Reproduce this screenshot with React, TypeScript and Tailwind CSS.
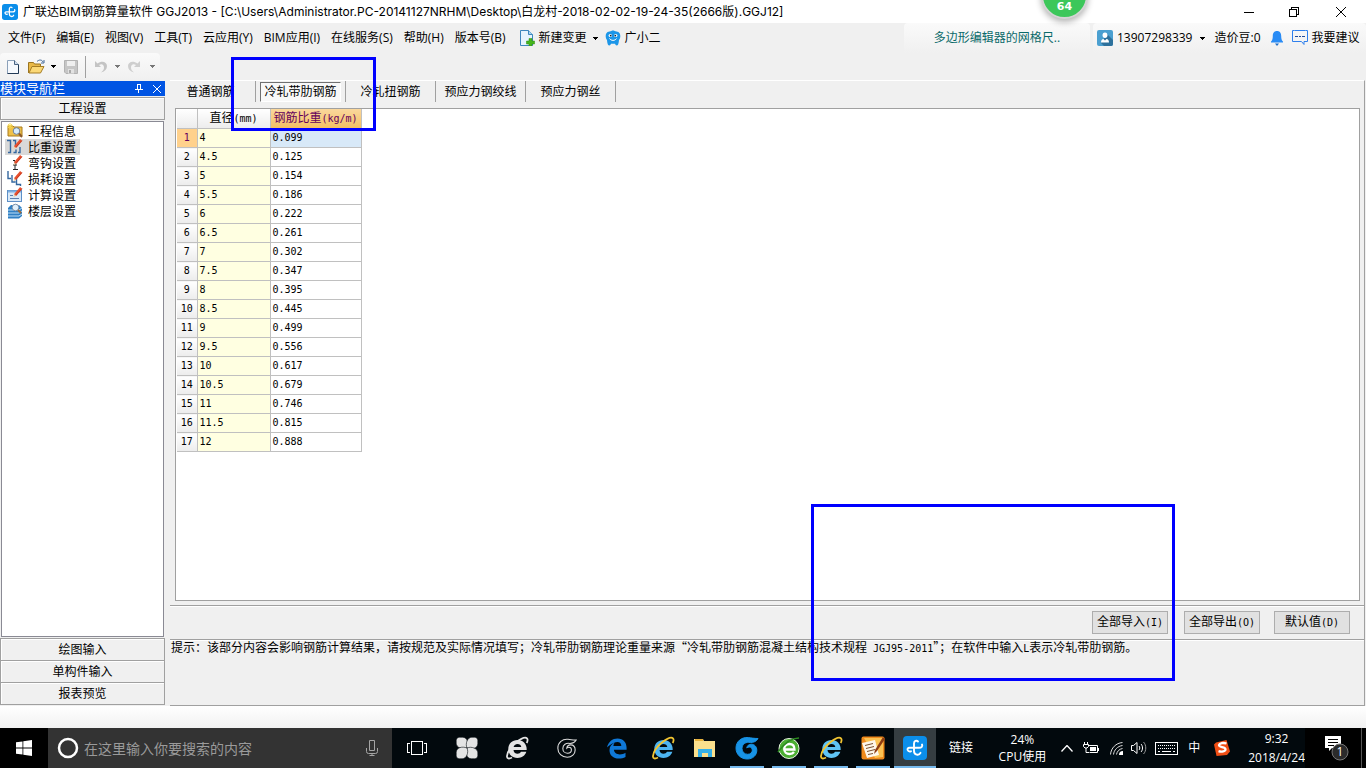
import { useState } from 'react';
import type { ReactNode } from 'react';

const MENUS = ['文件(F)', '编辑(E)', '视图(V)', '工具(T)', '云应用(Y)', 'BIM应用(I)', '在线服务(S)', '帮助(H)', '版本号(B)'];
const TABS = ['普通钢筋', '冷轧带肋钢筋', '冷轧扭钢筋', '预应力钢绞线', '预应力钢丝'];
const TAB_WIDTHS = ['w-[86px] pr-[4px]', 'w-[90px]', 'w-[90px]', 'w-[90px]', 'w-[90px]'];

const WEIGHTS: [string, string][] = [
  ['4', '0.099'],
  ['4.5', '0.125'],
  ['5', '0.154'],
  ['5.5', '0.186'],
  ['6', '0.222'],
  ['6.5', '0.261'],
  ['7', '0.302'],
  ['7.5', '0.347'],
  ['8', '0.395'],
  ['8.5', '0.445'],
  ['9', '0.499'],
  ['9.5', '0.556'],
  ['10', '0.617'],
  ['10.5', '0.679'],
  ['11', '0.746'],
  ['11.5', '0.815'],
  ['12', '0.888'],
];

// Half-width characters, 6px each beside 12px Chinese text
function Half({ children }: { children: ReactNode }) {
  return <span className="font-['DejaVu_Sans_Mono',monospace] text-[10px]">{children}</span>;
}

function Caret({ className = 'text-black' }: { className?: string }) {
  return (
    <svg width="5" height="3" viewBox="0 0 5 3" className={`shrink-0 ${className}`} shapeRendering="crispEdges">
      <path d="M0 0h5v1H4v1H3v1H2V2H1V1H0z" fill="currentColor" />
    </svg>
  );
}

function GlodonMark({ size }: { size: number }) {
  return (
    <svg width={size} height={size} viewBox="0 0 24 24" className="shrink-0">
      <rect width="24" height="24" rx="4" fill="#0b8eea" />
      <path
        d="M15 5.500C13.500 3.800 11 5 11 7.500V15c0 4 5 5 6.500 1.800M8 15.300c-3.500 1-5-3.300-1.500-3.500H16c2.600 0 3.800-1.500 3-3.300"
        fill="none"
        stroke="#fff"
        strokeWidth="1.900"
        strokeLinecap="round"
      />
    </svg>
  );
}

/* ---------- side bar icons ---------- */

function Pencil() {
  return (
    <>
      <path d="M14.2 1 8 8.2" stroke="#e8502e" strokeWidth="2.8" />
      <path d="M15 1.3 8.8 8.6" stroke="#b8321c" strokeWidth="0.7" />
      <path d="m6.5 10.2.8-2.6 1.6 1.4z" fill="#f2cfa0" />
    </>
  );
}

function Icon16({ children }: { children: ReactNode }) {
  return (
    <svg width="16" height="16" viewBox="0 0 16 16" fill="none" className="shrink-0">
      {children}
    </svg>
  );
}

const NAV_ITEMS: { label: string; icon: ReactNode }[] = [
  {
    label: '工程信息',
    icon: (
      <Icon16>
        <path d="M1 3h5l1 1h8v9H1z" fill="#efc14a" stroke="#a97a1c" />
        <path d="M3 0v6M0 3h6M1 1l4 4M5 1 1 5" stroke="#f8d94c" strokeWidth="0.9" />
        <circle cx="9.5" cy="8" r="3.3" fill="#d7ecfb" stroke="#6b7f99" />
        <path d="m12 10.5 3 3.5" stroke="#8c5a2a" strokeWidth="2" />
      </Icon16>
    ),
  },
  {
    label: '比重设置',
    icon: (
      <Icon16>
        <path d="M0 1.500h3.500v12H1M6 1.500h2.500v6M6.500 13.500h2.500v-3M11 13.500h2V8" stroke="#35679f" strokeWidth="1.4" />
        <Pencil />
      </Icon16>
    ),
  },
  {
    label: '弯钩设置',
    icon: (
      <Icon16>
        <path d="M8 6v9M6 10h4M6 14.500h5M6 5.500h2" stroke="#222" />
        <Pencil />
      </Icon16>
    ),
  },
  {
    label: '损耗设置',
    icon: (
      <Icon16>
        <path d="M1 0v7.500h3M5 4v7h3.500M9.500 8v5.500h4V15" stroke="#35679f" strokeWidth="1.4" />
        <Pencil />
      </Icon16>
    ),
  },
  {
    label: '计算设置',
    icon: (
      <Icon16>
        <rect x="0.500" y="3.500" width="14" height="11" fill="#d9e9f8" stroke="#5d8fc7" />
        <path d="M1 4.500h13" stroke="#7fb0e2" strokeWidth="2" />
        <path d="M3 8.500h3M3 11.500h9" stroke="#5d7fae" />
        <Pencil />
      </Icon16>
    ),
  },
  {
    label: '楼层设置',
    icon: (
      <Icon16>
        <path d="m1 5 3-3h8l3 3v8l-3 2.500H1z" fill="#2f7fc4" />
        <path d="M1 7h11l3-2M1 10h11l3-2M1 13h11l3-2" stroke="#bfe0f7" />
        <circle cx="8.500" cy="4.500" r="3.300" fill="#e0f0fc" stroke="#7a8fa8" />
        <path d="m11 7 3 3" stroke="#9a6a3a" strokeWidth="2" />
      </Icon16>
    ),
  },
];

/* ---------- task bar icons ---------- */

function Svg24({ children }: { children: ReactNode }) {
  return (
    <svg width="24" height="24" viewBox="0 0 24 24" fill="none" className="shrink-0">
      {children}
    </svg>
  );
}

const EDGE_E =
  'M2 11.500C3.200 5.800 7.500 2.500 12.500 2.500c5.800 0 9.100 4 9.100 9.300v2H8.900c.3 3.100 2.800 4.600 5.900 4.600 2.100 0 4.200-.6 5.700-1.600v4.100c-2 1.100-4.300 1.600-6.700 1.600-5.400 0-9.300-3.100-9.300-8.300 0-3.900 2.100-6.500 5.400-7.800-1 1.100-1.400 2.300-1.500 3.600h7.900c0-2.700-1.500-4.100-4-4.100-3.600 0-7.400 2.700-10.400 5.600z';
const IE_E =
  'M12.500 4c-5.300 0-9.200 3.800-9.200 9s3.900 9 9.200 9c4.300 0 7.600-2.300 8.800-6.200H16c-.6 1.200-1.900 1.900-3.400 1.900-2.400 0-4-1.500-4.100-3.700h13.200C22 8 18 4 12.500 4zM8.600 11c.4-1.900 1.800-3 3.900-3s3.600 1.100 3.800 3z';
const SWIRL =
  'M23 2.500c-1.500 3-4.500 4-7.500 4C11 5.500 7 8 7 12.500c0 3.500 2.600 5.800 5.700 5.800 2.700 0 4.600-1.800 4.600-4.100 0-1.900-1.300-3.200-3.100-3.200-1 0-1.800.4-2.400 1 .3-2.300 2-3.800 4.500-3.800 3.200 0 5.500 2.500 5.500 6.100 0 5-4 8.700-9.500 8.700C5.800 23 1 18.300 1 12.200 1 5.500 6.500.8 13.300 1.600c2.400.3 6 .9 9.700.9z';

function ExplorerE({ color, ring }: { color: string; ring: string }) {
  return (
    <Svg24>
      <path d={IE_E} fill={color} />
      <path d="M7 21.500c-3 1.700-5.300 1.200-5-1.500.5-4 4-9.500 9-13.500S20.500.8 22 2.300c.9.900.7 2.600-.3 4.700" stroke={ring} strokeWidth="1.800" />
    </Svg24>
  );
}

const TASKS: { name: string; cell: string; bar?: string; icon: ReactNode }[] = [
  {
    name: '风车',
    cell: 'w-[50px]',
    icon: (
      <Svg24>
        {[0, 90, 180, 270].map(a => (
          <path key={a} d="M12 12C7.500 14 1.200 11.500 1.200 7.200V4.500c0-2 1.300-3.300 3.300-3.300h3C12.300 1.200 14 7 12 12z" fill="#e4e4e4" stroke="#02090d" strokeWidth="0.6" transform={`rotate(${a} 12 12)`} />
        ))}
      </Svg24>
    ),
  },
  { name: '浏览器', cell: 'w-[50px]', icon: <ExplorerE color="#e4e4e4" ring="#e4e4e4" /> },
  {
    name: '广联达',
    cell: 'w-[50px]',
    icon: (
      <svg width="20" height="20" viewBox="0 0 24 24" fill="none">
        <path d={SWIRL} stroke="#dcdcdc" strokeWidth="1.300" />
      </svg>
    ),
  },
  { name: 'Edge', cell: 'w-[50px]', icon: <Svg24><path d={EDGE_E} fill="#0f78d7" /></Svg24> },
  { name: 'Internet Explorer', cell: 'w-[42px]', icon: <ExplorerE color="#4db4f0" ring="#f2c532" /> },
  {
    name: '文件资源管理器',
    cell: 'w-[42px]',
    icon: (
      <Svg24>
        <path d="M1 3h9l1 2h11v16H1z" fill="#fbe08c" />
        <path d="M2 3h8v2H2z" fill="#e8b23c" />
        <path d="M5 21v-8h14v8h-4v-4H9v4z" fill="#36b1e8" />
      </Svg24>
    ),
  },
  { name: '广联达G+', cell: 'w-[42px]', bar: 'w-[34px]', icon: <Svg24><path d={SWIRL} fill="#1793e6" stroke="#1793e6" /></Svg24> },
  {
    name: '360浏览器',
    cell: 'w-[42px]',
    bar: 'w-[34px]',
    icon: (
      <Svg24>
        <circle cx="12" cy="12.500" r="10" fill="#4cae32" stroke="#e9f5e3" />
        <path d="M7.500 13.500h10c0-3.500-2-5.500-5-5.500s-5.300 2.200-5.300 5 2.200 5 5.300 5c2 0 3.600-.7 4.500-2" stroke="#fff" strokeWidth="2.300" />
        <path d="M1 16C6 9 14 2 22 2" stroke="#2b8a1f" strokeWidth="1.500" />
      </Svg24>
    ),
  },
  { name: 'IE', cell: 'w-[42px]', bar: 'w-[34px]', icon: <ExplorerE color="#5fc4f5" ring="#f2c532" /> },
  {
    name: '记事',
    cell: 'w-[42px]',
    bar: 'w-[34px]',
    icon: (
      <Svg24>
        <rect x="0.500" y="0.500" width="23" height="23" rx="2" fill="#f08a1c" />
        <path d="M3 2h19v19l-8 1z" fill="#fbc253" />
        <path d="m1 7 13-3 4 15-12 3z" fill="#fdf6ea" />
        <path d="m4 9.500 8-2M5 12.500l8-2M6 15.500l8-2M7 18.500l5-1" stroke="#7a5030" />
        <path d="m22 1-8 13-1 4 3-3 8-12z" fill="#8e3c12" />
      </Svg24>
    ),
  },
  { name: '钢筋算量', cell: 'w-[42px] bg-[#353d41]', bar: 'w-full', icon: <GlodonMark size={24} /> },
];

/* ---------- window parts ---------- */

function TitleBar() {
  return (
    <header className="flex h-[23px] shrink-0 items-center bg-white pl-[2px]">
      <GlodonMark size={16} />
      <h1 className="ml-[5px] flex-1 font-['Inter','Noto_Sans_CJK_SC',sans-serif] text-[12px] leading-[16px] whitespace-nowrap">
        广联达BIM钢筋算量软件 GGJ2013 - [C:\Users\Administrator.PC-20141127NRHM\Desktop\白龙村-2018-02-02-19-24-35(2666版).GGJ12]
      </h1>
      <button aria-label="最小化" className="grid w-[46px] place-items-center">
        <svg width="10" height="10" shapeRendering="crispEdges"><path d="M0 5.500h10" stroke="#000" /></svg>
      </button>
      <button aria-label="还原" className="grid w-[44px] place-items-center">
        <svg width="10" height="10" fill="none" stroke="#000" shapeRendering="crispEdges">
          <path d="M.5 2.500h7v7h-7zM2.500 2.500v-2h7v7h-2" />
        </svg>
      </button>
      <button aria-label="关闭" className="grid w-[50px] place-items-center">
        <svg width="10" height="10" stroke="#000"><path d="m0 0 10 10M10 0 0 10" /></svg>
      </button>
    </header>
  );
}

function MenuBar() {
  return (
    <div className="flex h-[30px] shrink-0 items-start justify-between text-[12px]">
      <nav className="flex h-[30px] items-center gap-[11px] pl-2 whitespace-nowrap">
        {MENUS.map(m => <button key={m}>{m}</button>)}
        <button className="ml-[3px] flex items-center gap-[4px]">
          <svg width="15" height="16" viewBox="0 0 15 16" fill="none">
            <path d="M.5.5h8l4 4v11H.5z" fill="#e6f4fd" stroke="#3d87bd" />
            <path d="M8.500.5v4h4" fill="#a9d5f2" stroke="#3d87bd" />
            <path d="M9 8.500h3v2.500h2.500v3H12V16H9v-2H6.500v-3H9z" fill="#46b51c" stroke="#2e8a10" strokeWidth="0.500" />
          </svg>
          新建变更
          <span className="pl-[2px]"><Caret /></span>
        </button>
        <button className="-ml-[4px] flex items-center gap-[4px]">
          <svg width="16" height="16" viewBox="0 0 16 16">
            <path d="M8 .5c1.200 0 2 .7 3.500 1C14.500 1.800 15.500 4 15.300 6.500c-.1 1.500-.5 2.500-1.300 3.500-.2 2-.5 3.500-1 4.800-.5 1-2 1-2.500 0l-.5-1H6l-.5 1c-.5 1-2 1-2.500 0-.5-1.300-.8-2.800-1-4.800C1.200 9 .8 8 .7 6.500.5 4 1.500 1.800 4.500 1.500 6 1.200 6.800.5 8 .5z" fill="#1c96e8" />
            <ellipse cx="5.300" cy="5.500" rx="1.700" ry="1.500" fill="#fff" />
            <ellipse cx="10.700" cy="5.500" rx="1.700" ry="1.500" fill="#fff" />
            <circle cx="5.700" cy="5.600" r="0.900" fill="#123" />
            <circle cx="10.300" cy="5.600" r="0.900" fill="#123" />
            <path d="M4.500 8.500c1.500 2.500 5.500 2.500 7 0" stroke="#fff" fill="none" />
          </svg>
          广小二
        </button>
      </nav>
      <div className="flex h-[30px] gap-[3px] whitespace-nowrap">
        <a href="#tips" className="flex w-[186px] items-center justify-center rounded-t bg-linear-to-b from-[#fafafa] to-[#f0f0f0] text-[#0a6a6a]">
          多边形编辑器的网格尺..
        </a>
        <div className="flex w-[273px] items-center rounded-t bg-linear-to-b from-[#fafafa] to-[#f0f0f0] pl-[4px]">
          <svg width="16" height="16" viewBox="0 0 16 16">
            <rect width="16" height="16" rx="2" fill="#4a9fd0" />
            <path d="m10 4 6 6v4a2 2 0 0 1-2 2H7l-3-3z" fill="#2d719c" />
            <path d="M8 2.500c1.700 0 2.500 1.200 2.500 2.700S9.500 8 8 8 5.500 6.700 5.500 5.200 6.300 2.500 8 2.500zM4 12.500c0-2 1-3.500 2.500-3.500L8 10.500 9.500 9c1.500 0 2.500 1.500 2.500 3.500z" fill="#fff" />
          </svg>
          <button className="ml-[4px] flex items-center gap-[8px]">13907298339<Caret /></button>
          <span className="ml-[9px]">造价豆:0</span>
          <button aria-label="消息" className="ml-[10px]">
            <svg width="12" height="15" viewBox="0 0 12 15">
              <path d="M6 0c3 0 4.200 2.200 4.200 5 0 3 .6 4.500 1.800 5.500v1H0v-1C1.200 9.500 1.800 8 1.800 5 1.800 2.200 3 0 6 0z" fill="#2a8cf5" />
              <path d="M4 12.500h4L6 15z" fill="#1f6fc9" />
            </svg>
          </button>
          <button className="ml-[9px] flex items-center gap-[4px]">
            <svg width="16" height="16" viewBox="0 0 16 16" fill="none">
              <path d="M2.500.5h-2v11h9l2.500 3v-3h3.500V.5h-2M2.500.5h11" stroke="#2f80ed" />
              <path d="M3 6.500h3M7 6.500h2M10 6.500h3" stroke="#234d9c" />
            </svg>
            我要建议
          </button>
        </div>
      </div>
    </div>
  );
}

function ToolBar() {
  return (
    <div className="flex h-[27px] w-[160px] shrink-0 items-center rounded bg-linear-to-b from-[#fafafa] to-[#f0f0f0] pl-[7px]">
      <button aria-label="新建">
        <svg width="12" height="14" viewBox="0 0 12 14">
          <path d="M.5.5h7l4 4v9H.5z" fill="#f6f9fd" stroke="#8ba0b9" />
          <path d="M11.500 4.500v9H.5" stroke="#223a56" fill="none" />
          <path d="M7.500.5v4h4" fill="#cfdceb" stroke="#4a6482" />
        </svg>
      </button>
      <button aria-label="打开" className="ml-[9px]">
        <svg width="17" height="15" viewBox="0 0 17 15">
          <path d="M.5 14V3.500h5l1 1.500h6v4" fill="#e9b948" stroke="#9a7420" />
          <path d="M1 14 4 7.500h12L12.500 14z" fill="#fbd876" stroke="#a57d25" />
          <path d="M9 2.500C11 .5 14 .5 15 3m1-2v3h-3" fill="none" stroke="#3f6697" />
        </svg>
      </button>
      <button aria-label="打开最近" className="ml-[6px]"><Caret /></button>
      <button aria-label="保存" disabled className="ml-[8px]">
        <svg width="14" height="14" viewBox="0 0 14 14">
          <path d="M.5.5h13v13H2l-1.500-1.500z" fill="#c6c6c6" stroke="#b2b2b2" />
          <path d="M3 1h8v5H3z" fill="#efefef" />
          <path d="M4 9h6v4.500H4z" fill="#e2e2e2" />
          <path d="M5 10h2v3H5z" fill="#aaa" />
        </svg>
      </button>
      <div className="ml-[7px] h-[22px] w-px bg-[#a0a0a0]"></div>
      <button aria-label="撤销" disabled className="ml-[8px]">
        <svg width="13" height="12" viewBox="0 0 13 12" fill="none">
          <path d="M1 0v6h6L5 4c3-2 5 0 5 2.500 0 2-1 3.500-3 5 4-1 6-3.500 6-6.500 0-4-5-6-9.500-2.500z" fill="#c4c4c4" />
        </svg>
      </button>
      <span className="ml-[8px] flex"><Caret className="text-[#777]" /></span>
      <button aria-label="重做" disabled className="ml-[8px]">
        <svg width="13" height="12" viewBox="0 0 13 12" fill="none">
          <path d="M12 0v6H6l2-2C5 2 3 4 3 6.500c0 2 1 3.500 3 5C2 10.500 0 8 0 5c0-4 5-6 9.500-2.500z" fill="#cecece" />
        </svg>
      </button>
      <span className="ml-[9px] flex"><Caret className="text-[#777]" /></span>
    </div>
  );
}

function SideBar() {
  const [active, setActive] = useState('比重设置');
  return (
    <aside className="mb-px flex w-[165px] shrink-0 flex-col">
      <div className="mt-px flex h-[15px] items-center bg-[#0054e3] pr-[4px] text-[13px] leading-[15px] text-white">
        <span className="flex-1">模块导航栏</span>
        <button aria-label="固定" className="mr-[10px]">
          <svg width="8" height="9" fill="none" stroke="#fff" shapeRendering="crispEdges">
            <path d="M2.500 5V.5h3V5M5 .5v5M0 5.500h8M3.500 5v4" />
          </svg>
        </button>
        <button aria-label="关闭导航栏">
          <svg width="8" height="8" stroke="#fff"><path d="m0 0 8 8M8 0 0 8" /></svg>
        </button>
      </div>
      <button className="mt-px h-[23px] border border-[#a0a0a0] pt-px text-[12px] leading-[20px] shadow-[inset_1px_1px_0_#fff]">工程设置</button>
      <ul className="mx-[1px] mt-px mb-px flex-1 border border-[#8a8a94] bg-white pt-px pl-[3px]">
        {NAV_ITEMS.map(item => (
          <li key={item.label} className="h-4">
            <button
              onClick={() => setActive(item.label)}
              className={`flex h-4 w-[75px] items-center gap-[5px] pl-[2px] text-[12px] leading-4 ${active === item.label ? 'bg-[#d9d9d9]' : ''}`}
            >
              {item.icon}
              <span className="pt-px">{item.label}</span>
            </button>
          </li>
        ))}
      </ul>
      <div className="flex flex-col border-t border-[#a0a0a0]">
        {['绘图输入', '单构件输入', '报表预览'].map(label => (
          <button key={label} className="h-[22px] border border-t-0 border-[#a0a0a0] pt-px text-[12px] leading-[20px] shadow-[inset_1px_1px_0_#fff]">
            {label}
          </button>
        ))}
      </div>
    </aside>
  );
}

function WeightTable() {
  return (
    <table className="table-fixed border-collapse text-[12px] leading-[18px]">
      <colgroup>
        <col className="w-[20px]" />
        <col className="w-[73px]" />
        <col className="w-[91px]" />
      </colgroup>
      <thead>
        <tr className="h-[19px]">
          <th className="border-r border-b border-[#c0c0c0] bg-linear-to-b from-white to-[#ececec]"></th>
          <th className="border-r border-b border-[#c0c0c0] bg-linear-to-b from-white to-[#ececec] p-0 font-normal">直径<Half>(mm)</Half></th>
          <th className="border-r border-b border-[#c0c0c0] bg-linear-to-b from-[#fad79c] to-[#f3bf62] p-0 font-normal text-[#66005c]">钢筋比重<Half>(kg/m)</Half></th>
        </tr>
      </thead>
      <tbody className="font-['DejaVu_Sans_Mono',monospace] text-[10px]">
        {WEIGHTS.map(([diameter, weight], i) => (
          <tr key={diameter} className="h-[19px]">
            <th className={`border-r border-b border-[#c0c0c0] p-0 font-normal ${i === 0 ? 'bg-[#ffd18c] text-[#66005c]' : 'bg-linear-to-b from-white to-[#ececec]'}`}>
              {i + 1}
            </th>
            <td className="border-r border-b border-[#c0c0c0] bg-[#ffffe1] p-0 pl-[2px]">{diameter}</td>
            <td className={`border-r border-b border-[#c0c0c0] p-0 pl-[2px] ${i === 0 ? 'bg-[#d8e9f8]' : 'bg-white'}`}>{weight}</td>
          </tr>
        ))}
      </tbody>
    </table>
  );
}

function MainPanel() {
  const [tab, setTab] = useState(1);
  return (
    <main className="mr-px ml-[5px] flex min-w-0 flex-1 flex-col border-t border-r border-b border-t-white border-r-[#a0a0a0] border-b-[#a0a0a0]">
      <div role="tablist" className="flex h-[27px] shrink-0 items-start text-[12px]">
        {TABS.map((t, i) => (
          <div key={t} className={`flex h-[21px] items-center justify-center border-r border-[#a0a0a0] ${TAB_WIDTHS[i]}`}>
            <button
              role="tab"
              aria-selected={tab === i}
              onClick={() => setTab(i)}
              className={`h-[20px] px-[3px] leading-[18px] whitespace-nowrap ${tab === i ? 'border border-t-[#707070] border-r-white border-b-white border-l-[#707070] bg-[#f8f8f8]' : ''}`}
            >
              {t}
            </button>
          </div>
        ))}
      </div>
      <section className="mr-[4px] ml-[5px] flex-1 border border-[#a0a0a0] bg-white pl-px">
        <WeightTable />
      </section>
      <div className="mt-[4px] flex h-[34px] shrink-0 items-center justify-end border-t border-[#a0a0a0] pr-[14px] text-[12px] shadow-[inset_0_1px_0_#fff]">
        <button className="h-[23px] w-[76px] border border-[#adadad] bg-[#e1e1e1] leading-[20px]">全部导入<Half>(I)</Half></button>
        <button className="ml-[16px] h-[23px] w-[76px] border border-[#adadad] bg-[#e1e1e1] leading-[20px]">全部导出<Half>(O)</Half></button>
        <button className="ml-[14px] h-[23px] w-[76px] border border-[#adadad] bg-[#e1e1e1] leading-[20px]">默认值<Half>(D)</Half></button>
      </div>
      <p className="h-[66px] shrink-0 border-t border-[#a0a0a0] pl-px font-['Noto_Sans_CJK_SC',sans-serif] text-[12px] leading-[14px] shadow-[inset_0_1px_0_#fff]">
        提示：该部分内容会影响钢筋计算结果，请按规范及实际情况填写；冷轧带肋钢筋理论重量来源“冷轧带肋钢筋混凝土结构技术规程<Half> JGJ95-2011</Half>”；在软件中输入<Half>L</Half>表示冷轧带肋钢筋。
      </p>
    </main>
  );
}

function TaskBar() {
  return (
    <footer className="flex h-[40px] shrink-0 items-stretch bg-[#02090d] text-[12px] text-white">
      <button aria-label="开始" className="grid w-[48px] place-items-center bg-black">
        <svg width="16" height="16" viewBox="0 0 16 16" fill="#fff">
          <path d="M0 2.300 6.500 1.400v6.200H0zM7.300 1.300 16 0v7.600H7.300zM0 8.400h6.500v6.200L0 13.700zM7.300 8.400H16V16l-8.700-1.300z" />
        </svg>
      </button>
      <label className="flex w-[344px] items-center bg-[#333] pr-[14px] pl-[9px]">
        <svg width="22" height="22" fill="none"><circle cx="11" cy="11" r="9" stroke="#fff" strokeWidth="2.500" /></svg>
        <input
          aria-label="搜索"
          placeholder="在这里输入你要搜索的内容"
          className="ml-[5px] min-w-0 flex-1 bg-transparent text-[14px] outline-none placeholder:text-[#9a9a9a]"
        />
        <svg width="12" height="16" fill="none" stroke="#a5a5a5">
          <path d="M3.500.5h5v10h-5zM.5 8v3.500a2 2 0 0 0 2 2h7a2 2 0 0 0 2-2V8M6 13.500V16M3.500 15.500h5" />
        </svg>
      </label>
      <button aria-label="任务视图" className="grid w-[50px] place-items-center">
        <svg width="20" height="14" fill="none" stroke="#fff" shapeRendering="crispEdges">
          <path d="M4.500.5h11v13h-11zM3 2.500H.5v9H3M17 2.500h2.500v9H17" />
        </svg>
      </button>
      {TASKS.map(t => (
        <button key={t.name} aria-label={t.name} className={`flex flex-col items-center justify-end ${t.cell}`}>
          <span className="grid h-[36px] place-items-center">{t.icon}</span>
          <span className={`h-[2px] ${t.bar ? `${t.bar} bg-[#76b9ed]` : ''}`}></span>
        </button>
      ))}
      <div className="flex flex-1 items-center justify-between pl-[13px]">
        <span>链接</span>
        <div className="flex items-center self-stretch">
          <div className="mr-[15px] text-center leading-[17px]">
            24%
            <br />
            CPU使用
          </div>
          <svg width="12" height="7" fill="none" stroke="#fff" strokeWidth="1.300"><path d="m.5 6.500 5.500-6 5.500 6" /></svg>
          <svg width="16" height="13" fill="none" stroke="#fff" className="ml-[10px]">
            <path d="M5.500 3.500h9v7h-8M15.500 6v3M1.500 0v2M4.500 0v2M.5 2.500h5v2L4 6H2L.5 4.500zM3 6v4.500h3" />
            <path d="M7 5h6v4H7z" fill="#fff" stroke="none" />
          </svg>
          <svg width="13" height="13" fill="none" stroke="#ddd" className="ml-[11px]">
            <path d="M.5 12.500C1 6 6 1 12.500.5M3.500 12.500c.5-4.500 4-8.300 9-9M6.500 12.500c.5-3 2.700-5.500 6-6" />
            <path d="M9 13a4 4 0 0 1 4-4v4z" fill="#fff" stroke="none" />
          </svg>
          <svg width="16" height="14" fill="none" stroke="#fff" className="ml-[8px]">
            <path d="M.5 4.500h2l3.500-3v11l-3.500-3h-2zM8 5c1 1 1 3 0 4M10 3c2 2 2 6 0 8" />
            <path d="M12.500 1c3 3 3 9 0 12" stroke="#999" />
          </svg>
          <svg width="23" height="13" fill="none" stroke="#fff" shapeRendering="crispEdges" className="ml-[8px]">
            <path d="M.5.5h22v12H.5z" />
            <path d="M3 3.500h17M3 6.500h17" strokeDasharray="1 1" />
            <path d="M3 9.500h2M7 9.500h9M18 9.500h2" />
          </svg>
          <span className="ml-[10px]">中</span>
          <svg width="16" height="16" viewBox="0 0 16 16" fill="none" className="ml-[14px]">
            <path d="M2 2.500 12.500 0 16 11.500 13 15 2.500 16 0 4.500z" fill="#f04e14" />
            <path d="M12.500 3.500c-3-1-7-.5-7.500 1.500-.5 2.500 6.500 1.500 6.500 4.200 0 2.300-4 3-7 2" stroke="#fff" strokeWidth="2.300" />
          </svg>
          <div className="ml-[18px] text-center leading-[19px]">
            9:32
            <br />
            2018/4/24
          </div>
          <button aria-label="通知" className="grid w-[56px] place-items-center self-stretch bg-black pl-[6px]">
            <svg width="26" height="26" viewBox="0 0 26 26">
              <path d="M2 1h16v12H9l-3 3v-3H2z" fill="#fff" />
              <path d="M5 4.500h10M5 7.500h10M5 10.500h6" stroke="#000" />
              <circle cx="17" cy="17" r="8" fill="#2b2b2b" stroke="#777" />
              <text x="17" y="21" textAnchor="middle" fill="#fff" fontSize="12">1</text>
            </svg>
          </button>
          <div className="w-[5px] self-stretch border-l border-[#555] bg-black"></div>
        </div>
      </div>
    </footer>
  );
}

export default function App() {
  return (
    <div className="relative flex min-h-screen flex-col overflow-hidden bg-[#f0f0f0] font-['Open_Sans','Noto_Sans_CJK_SC',sans-serif] text-black">
      <TitleBar />
      <MenuBar />
      <ToolBar />
      <div className="flex flex-1">
        <SideBar />
        <MainPanel />
      </div>
      <div className="h-[22px] shrink-0 bg-linear-to-b from-white to-[#f2f2f2]"></div>
      <TaskBar />

      {/* speed ball */}
      <div className="absolute -top-[28px] left-[1041px] flex h-[47px] w-[47px] items-end justify-center rounded-full border-2 border-[#d4d4d4] bg-[#3cc75a] pb-[3px] font-['DejaVu_Sans',sans-serif] text-[11px] leading-[14px] font-bold text-white shadow-[0_3px_6px_rgba(0,0,0,0.3)]">
        64
      </div>

      {/* highlight frames */}
      <div className="pointer-events-none absolute top-[57px] left-[231px] h-[74px] w-[145px] border-3 border-[#0000ff]"></div>
      <div className="pointer-events-none absolute top-[504px] left-[811px] h-[177px] w-[364px] border-3 border-[#0000ff]"></div>
    </div>
  );
}
